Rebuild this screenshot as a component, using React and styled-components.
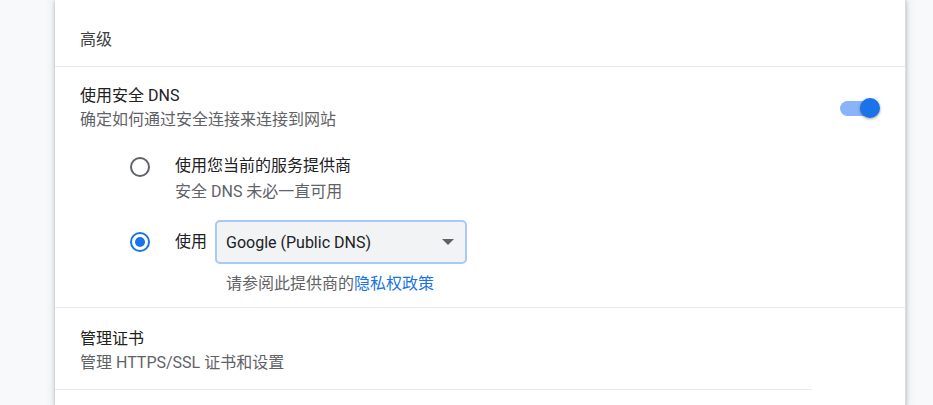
import styled, { createGlobalStyle } from "styled-components";

const GlobalStyle = createGlobalStyle`
  html, body {
    margin: 0;
    padding: 0;
    background: #f8f9fa;
    overflow: hidden;
  }
  body {
    font-family: Roboto, "Noto Sans CJK SC", sans-serif;
    font-size: 16px;
    color: #202124;
  }
`;

const Page = styled.div`
  height: 405px;
  padding-left: 55px;
`;

const Card = styled.section`
  width: 850px;
  height: 100%;
  background: #fff;
  box-shadow: 0 1px 3px rgba(60, 64, 67, 0.3), 0 2px 8px 2px rgba(60, 64, 67, 0.12);
  border-right: 1px solid #dadce0;
`;

const Header = styled.div`
  height: 67px;
  display: flex;
  align-items: center;
  padding: 10px 25px 0;
  color: #3c4043;
  border-bottom: 1px solid #e8eaed;
  box-sizing: border-box;
`;

const Row = styled.div`
  padding: ${(p) => p.$pad || "16px 25px 16px"};
  border-bottom: ${(p) => (p.$noBorder ? "none" : "1px solid #e8eaed")};
`;

const RowHead = styled.div`
  display: flex;
  align-items: center;
  justify-content: space-between;
`;

const Title = styled.div`
  line-height: 24px;
  color: #202124;
`;

const Sub = styled.div`
  line-height: 24px;
  color: #5f6368;
  margin-top: ${(p) => p.$gap || "0"};
`;

const Toggle = styled.div`
  position: relative;
  width: 40px;
  height: 20px;
`;

const Track = styled.div`
  position: absolute;
  left: 0;
  top: 3px;
  width: 35px;
  height: 15px;
  border-radius: 8px;
  background: #8ab4f8;
`;

const Knob = styled.div`
  position: absolute;
  right: 0;
  top: 0;
  width: 20px;
  height: 20px;
  border-radius: 50%;
  background: #1a73e8;
  box-shadow: 0 1px 3px rgba(0, 0, 0, 0.4);
`;

const RadioGroup = styled.div`
  padding-left: 50px;
  margin-top: 22px;
  display: flex;
  flex-direction: column;
`;

const Option = styled.div`
  display: flex;
  align-items: ${(p) => (p.$top ? "flex-start" : "center")};
  gap: 25px;
  margin-top: ${(p) => p.$gap || "0"};
`;

const Radio = styled.div`
  width: 20px;
  height: 20px;
  box-sizing: border-box;
  border-radius: 50%;
  border: 2.5px solid ${(p) => (p.$checked ? "#1a73e8" : "#5f6368")};
  display: flex;
  align-items: center;
  justify-content: center;
  flex-shrink: 0;
  margin-top: ${(p) => (p.$top ? "3px" : "0")};

  &::after {
    content: "";
    display: ${(p) => (p.$checked ? "block" : "none")};
    width: 10px;
    height: 10px;
    border-radius: 50%;
    background: #1a73e8;
  }
`;

const OptionText = styled.div`
  display: flex;
  flex-direction: column;
`;

const UseLine = styled.div`
  display: flex;
  align-items: center;
  gap: 8px;
`;

const Select = styled.div`
  width: 252px;
  height: 44px;
  box-sizing: border-box;
  border: 2px solid #a8c7fa;
  border-radius: 5px;
  background: #f1f3f4;
  display: flex;
  align-items: center;
  justify-content: space-between;
  padding: 0 11px 0 9px;
  color: #202124;
`;

const Arrow = styled.span`
  width: 0;
  height: 0;
  border-left: 6px solid transparent;
  border-right: 6px solid transparent;
  border-top: 6px solid #5f6368;
`;

const Note = styled.div`
  margin-top: 8px;
  padding-left: 96px;
  line-height: 24px;
  color: #5f6368;
`;

const Link = styled.a`
  color: #1a73e8;
  text-decoration: none;
`;

const Separator = styled.div`
  height: 1px;
  background: #e8eaed;
  margin-right: 93px;
`;

const App = () => {
  return (
    <Page>
      <GlobalStyle />
      <Card>
        <Header>高级</Header>
        <Row $pad="17px 25px 11px">
          <RowHead>
            <div>
              <Title>使用安全 DNS</Title>
              <Sub>确定如何通过安全连接来连接到网站</Sub>
            </div>
            <Toggle>
              <Track />
              <Knob />
            </Toggle>
          </RowHead>
          <RadioGroup>
            <Option $top>
              <Radio $top />
              <OptionText>
                <Title>使用您当前的服务提供商</Title>
                <Sub $gap="2px">安全 DNS 未必一直可用</Sub>
              </OptionText>
            </Option>
            <Option $gap="16px">
              <Radio $checked />
              <UseLine>
                <Title>使用</Title>
                <Select>
                  <span>Google (Public DNS)</span>
                  <Arrow />
                </Select>
              </UseLine>
            </Option>
            <Note>
              请参阅此提供商的<Link href="#">隐私权政策</Link>
            </Note>
          </RadioGroup>
        </Row>
        <Row $pad="19px 25px 14px" $noBorder>
          <Title>管理证书</Title>
          <Sub>管理 HTTPS/SSL 证书和设置</Sub>
        </Row>
        <Separator />
      </Card>
    </Page>
  );
};

export default App;
